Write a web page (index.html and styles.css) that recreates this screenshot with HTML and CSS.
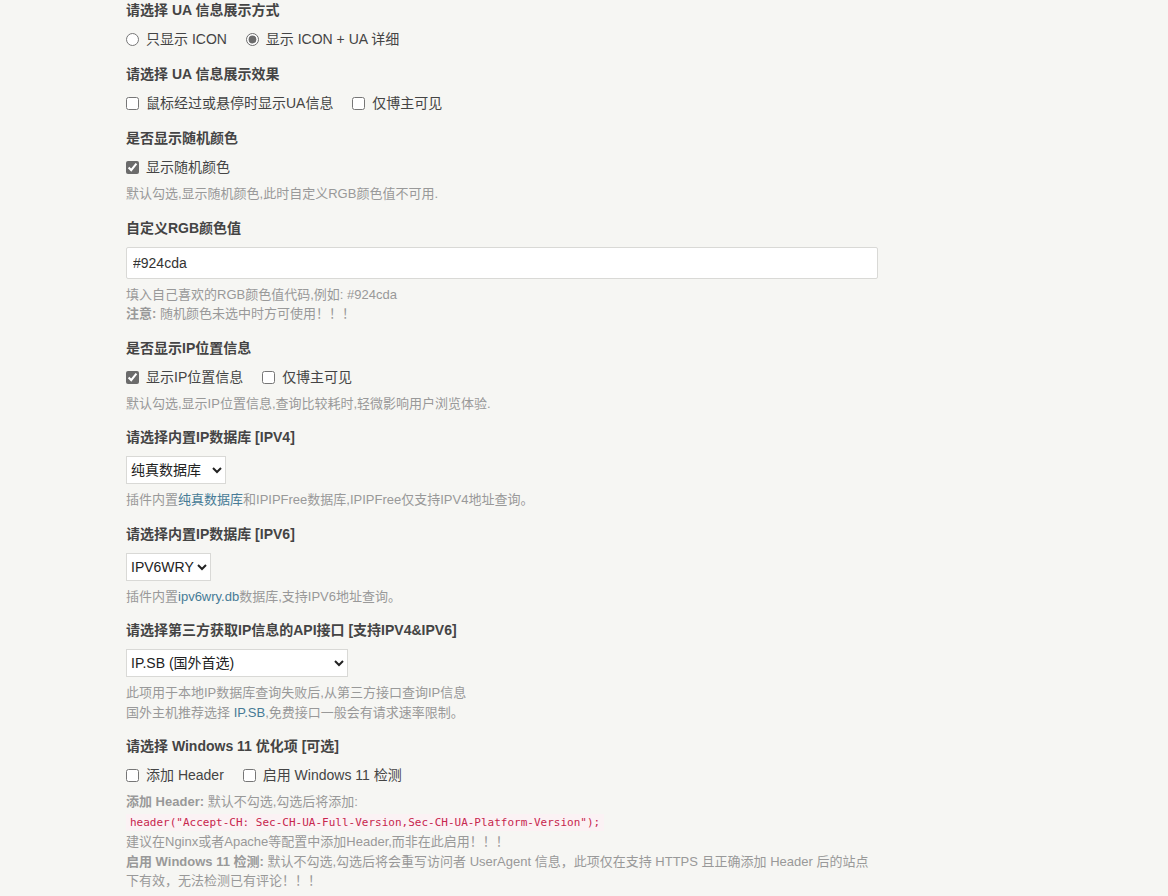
FILE: index.html
```html
<!DOCTYPE html>
<html lang="zh-CN">
<head>
    <meta charset="UTF-8">
    <title>插件设置</title>
    <link rel="stylesheet" href="styles.css">
</head>
<body>
    <form class="typecho-form" action="" method="post">

        <!-- UA display mode -->
        <ul class="typecho-option">
            <li>
                <label class="typecho-label">请选择 UA 信息展示方式</label>
                <span><input type="radio" name="ua_mode" id="ua_mode_icon"><label for="ua_mode_icon">只显示 ICON</label></span>
                <span><input type="radio" name="ua_mode" id="ua_mode_full" checked><label for="ua_mode_full">显示 ICON + UA 详细</label></span>
            </li>
        </ul>

        <!-- UA display effect -->
        <ul class="typecho-option">
            <li>
                <label class="typecho-label">请选择 UA 信息展示效果</label>
                <span><input type="checkbox" id="ua_hover"><label for="ua_hover">鼠标经过或悬停时显示UA信息</label></span>
                <span><input type="checkbox" id="ua_owner"><label for="ua_owner">仅博主可见</label></span>
            </li>
        </ul>

        <!-- Random color -->
        <ul class="typecho-option">
            <li>
                <label class="typecho-label">是否显示随机颜色</label>
                <span><input type="checkbox" id="random_color" checked><label for="random_color">显示随机颜色</label></span>
                <p class="description">默认勾选,显示随机颜色,此时自定义RGB颜色值不可用.</p>
            </li>
        </ul>

        <!-- Custom RGB -->
        <ul class="typecho-option">
            <li>
                <label class="typecho-label" for="rgb_color">自定义RGB颜色值</label>
                <input class="text" type="text" id="rgb_color" value="#924cda">
                <p class="description">填入自己喜欢的RGB颜色值代码,例如: #924cda<br><b>注意:</b> 随机颜色未选中时方可使用！！！</p>
            </li>
        </ul>

        <!-- IP location -->
        <ul class="typecho-option">
            <li>
                <label class="typecho-label">是否显示IP位置信息</label>
                <span><input type="checkbox" id="ip_show" checked><label for="ip_show">显示IP位置信息</label></span>
                <span><input type="checkbox" id="ip_owner"><label for="ip_owner">仅博主可见</label></span>
                <p class="description">默认勾选,显示IP位置信息,查询比较耗时,轻微影响用户浏览体验.</p>
            </li>
        </ul>

        <!-- IPv4 database -->
        <ul class="typecho-option">
            <li>
                <label class="typecho-label" for="ipv4_db">请选择内置IP数据库 [IPV4]</label>
                <select id="ipv4_db" class="select-ipv4">
                    <option selected>纯真数据库</option>
                    <option>IPIPFree</option>
                </select>
                <p class="description">插件内置<a href="#">纯真数据库</a>和IPIPFree数据库,IPIPFree仅支持IPV4地址查询。</p>
            </li>
        </ul>

        <!-- IPv6 database -->
        <ul class="typecho-option">
            <li>
                <label class="typecho-label" for="ipv6_db">请选择内置IP数据库 [IPV6]</label>
                <select id="ipv6_db" class="select-ipv6">
                    <option selected>IPV6WRY</option>
                </select>
                <p class="description">插件内置<a href="#">ipv6wry.db</a>数据库,支持IPV6地址查询。</p>
            </li>
        </ul>

        <!-- Third party API -->
        <ul class="typecho-option">
            <li>
                <label class="typecho-label" for="ip_api">请选择第三方获取IP信息的API接口 [支持IPV4&amp;IPV6]</label>
                <select id="ip_api" class="select-api">
                    <option selected>IP.SB (国外首选)</option>
                    <option>太平洋网络 (国内)</option>
                    <option>不使用第三方接口</option>
                </select>
                <p class="description">此项用于本地IP数据库查询失败后,从第三方接口查询IP信息<br>国外主机推荐选择 <a href="#">IP.SB</a>,免费接口一般会有请求速率限制。</p>
            </li>
        </ul>

        <!-- Windows 11 -->
        <ul class="typecho-option">
            <li>
                <label class="typecho-label">请选择 Windows 11 优化项 [可选]</label>
                <span><input type="checkbox" id="win11_header"><label for="win11_header">添加 Header</label></span>
                <span><input type="checkbox" id="win11_detect"><label for="win11_detect">启用 Windows 11 检测</label></span>
                <p class="description"><b>添加 Header: </b>默认不勾选,勾选后将添加:<br><code>header("Accept-CH: Sec-CH-UA-Full-Version,Sec-CH-UA-Platform-Version");</code><br>建议在Nginx或者Apache等配置中添加Header,而非在此启用！！！<br><b>启用 Windows 11 检测: </b>默认不勾选,勾选后将会重写访问者 UserAgent 信息，此项仅在支持 HTTPS 且正确添加 Header 后的站点下有效，无法检测已有评论！！！</p>
            </li>
        </ul>

    </form>
</body>
</html>
```

FILE: styles.css
```css
/* Basic Styling */
body {
    margin: 0;
    background-color: #F6F6F3;
    color: #444;
    font-family: "Liberation Sans", "Noto Sans CJK SC", sans-serif;
    font-size: 14px;
    line-height: 1.5;
}

a {
    color: #467B96;
    text-decoration: none;
}

.typecho-form {
    width: 752px;
    margin-left: 126px;
}

.typecho-option {
    list-style: none;
    margin: 14px 0;
    padding: 0;
}

.typecho-form .typecho-option:first-child {
    margin-top: 0;
}

.typecho-label {
    display: block;
    margin-bottom: 8px;
    font-weight: bold;
}

.typecho-option span {
    margin-right: 15px;
}

/* Radio and checkbox */
.typecho-option input[type="radio"],
.typecho-option input[type="checkbox"] {
    width: 13px;
    height: 13px;
    margin: 0 7px 0 0;
    vertical-align: -2px;
    accent-color: #6b6b6b;
}

/* Text input */
.text {
    display: block;
    box-sizing: border-box;
    width: 100%;
    height: 32px;
    padding: 4px 6px;
    border: 1px solid #D9D9D6;
    border-radius: 2px;
    background: #fff;
    color: #333;
    font-family: inherit;
    font-size: 14px;
    outline: none;
}

/* Select */
select {
    box-sizing: border-box;
    height: 28px;
    padding: 0;
    border: 1px solid #D9D9D6;
    border-radius: 0;
    background: #fff;
    color: #222;
    font-family: inherit;
    font-size: 14px;
}

.select-ipv4 {
    width: 100px;
}

.select-ipv6 {
    width: 85px;
}

.select-api {
    width: 222px;
}

.description {
    margin: 6px 0 0;
    color: #999;
    font-size: 13px;
    line-height: 19.5px;
}

.description code {
    padding: 2px 4px;
    background-color: #FBF2F4;
    color: #C7254E;
    font-family: "DejaVu Sans Mono", monospace;
    font-size: 11px;
}
```
